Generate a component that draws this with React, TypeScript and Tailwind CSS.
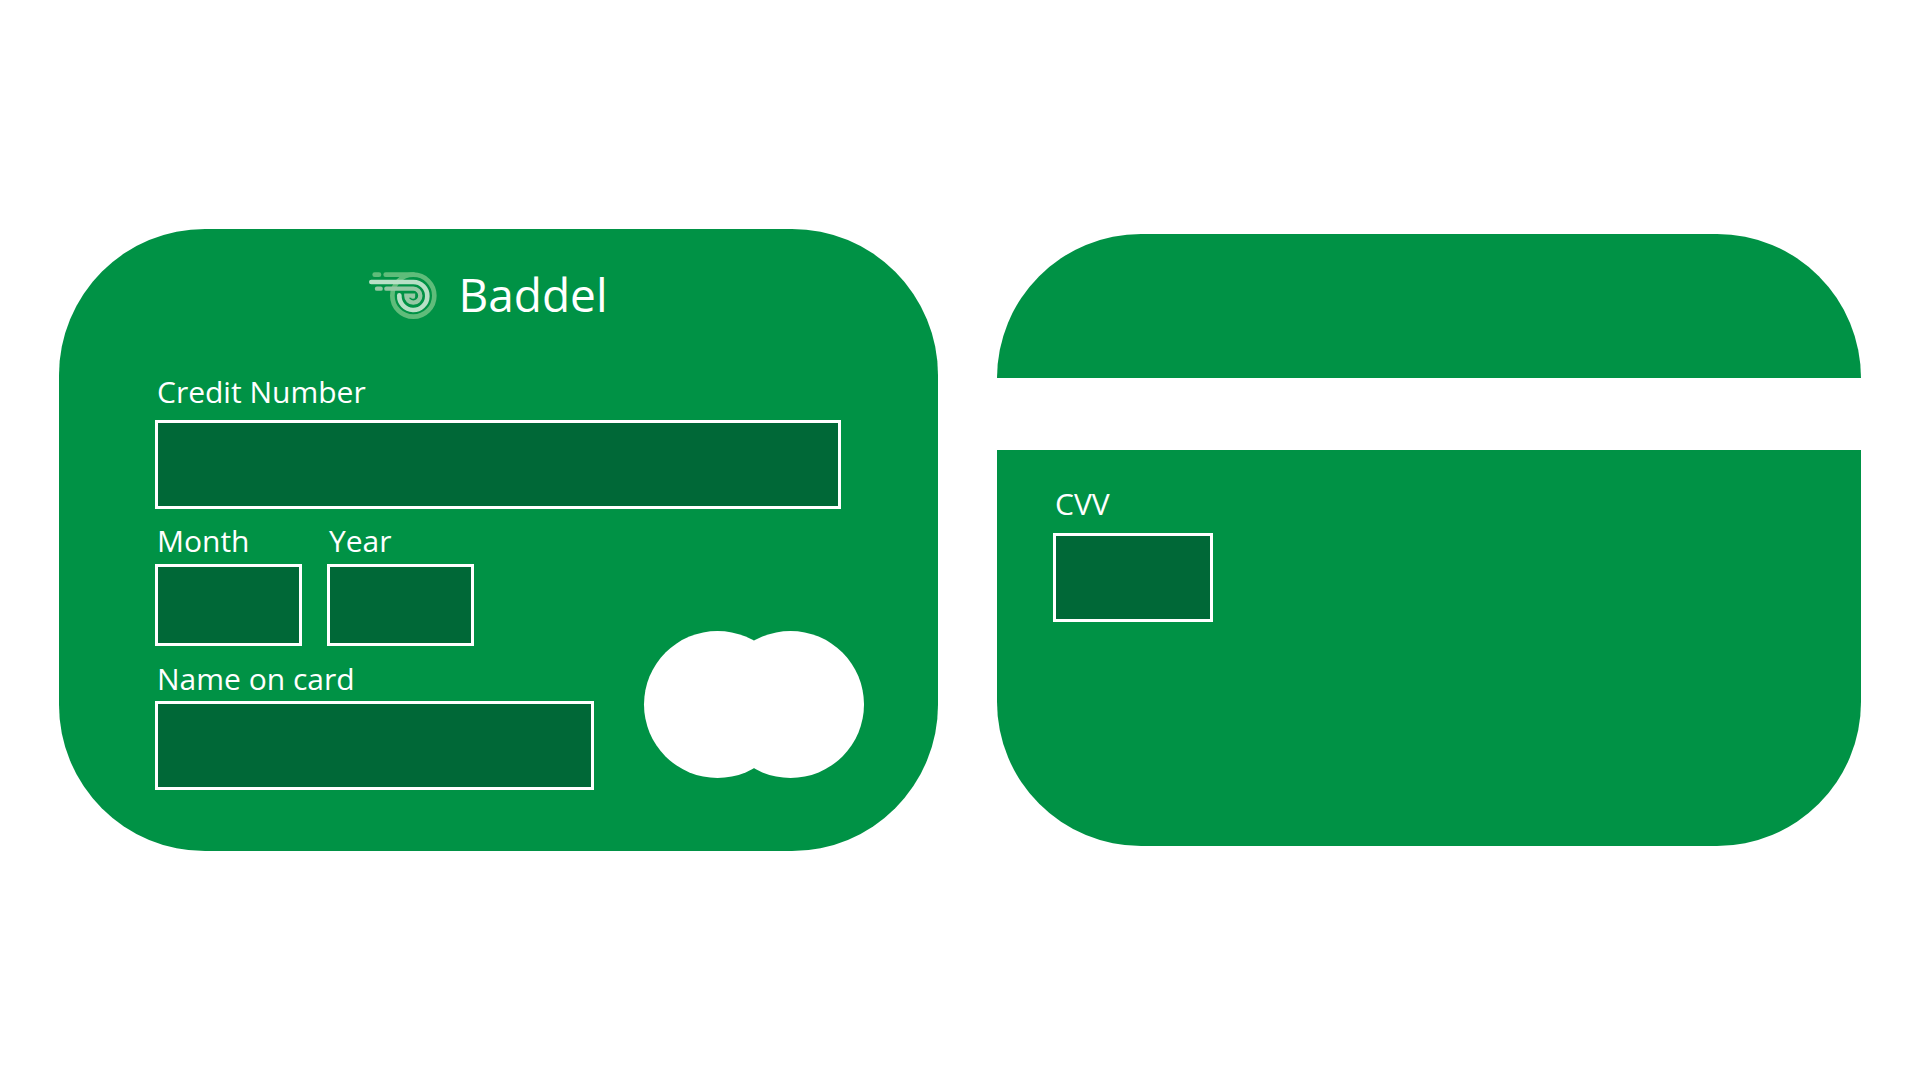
import type { InputHTMLAttributes } from "react";

type FieldProps = InputHTMLAttributes<HTMLInputElement> & {
  id: string;
  label: string;
  gap: string;
  size: string;
};

function Field({ id, label, gap, size, ...rest }: FieldProps) {
  return (
    <div className={`flex flex-col ${gap}`}>
      <label htmlFor={id} className="pl-0.5 text-[30px] leading-10 whitespace-nowrap">
        {label}
      </label>
      <input
        id={id}
        type="text"
        className={`block border-3 border-white bg-[#006837] px-4 text-3xl text-white outline-none ${size}`}
        {...rest}
      />
    </div>
  );
}

function SpiralLogo() {
  return (
    <svg
      viewBox="0 -3 270 210"
      className="h-[70px] w-[90px]"
      fill="none"
      strokeWidth="14"
      strokeLinecap="round"
      aria-hidden="true"
    >
      <g stroke="#5fbc7a">
        <path d="M44 44H57" />
        <path d="M77 44H160" />
        <circle cx="160" cy="107" r="63" />
      </g>
      <path d="M34 66H160A42 42 0 1 1 118 106" stroke="#b8e0c6" />
      <g stroke="#95c8a4" strokeWidth="13">
        <path d="M51 86H62" />
        <path d="M79 86H160A21 21 0 1 1 139 107H159V110" />
      </g>
    </svg>
  );
}

export default function App() {
  return (
    <main className="grid min-h-screen grid-cols-[879fr_864fr] items-center gap-[59px] bg-white px-[59px] font-['Open_Sans',sans-serif] text-white">
      <section className="rounded-[146px] bg-[#009245] pt-[30px] pr-[97px] pb-[61px] pl-24">
        <header className="flex items-center justify-center gap-2 pr-7">
          <SpiralLogo />
          <h1 className="text-[46px] leading-[60px]">Baddel</h1>
        </header>
        <form className="mt-[43px] flex flex-col gap-3">
          <Field id="number" label="Credit Number" gap="gap-2" size="h-[89px] w-full" inputMode="numeric" />
          <div className="flex items-end justify-between">
            <div className="flex w-[64%] flex-col gap-[13px]">
              <div className="flex gap-[25px]">
                <Field id="month" label="Month" gap="gap-[3px]" size="h-[82px] w-[147px]" inputMode="numeric" />
                <Field id="year" label="Year" gap="gap-[3px]" size="h-[82px] w-[147px]" inputMode="numeric" />
              </div>
              <Field id="name" label="Name on card" gap="gap-[2px]" size="h-[89px] w-full" />
            </div>
            <div className="-mr-[23px] mb-3 flex shrink-0" aria-hidden="true">
              <div className="size-[147px] rounded-full bg-white" />
              <div className="-ml-[74px] size-[147px] rounded-full bg-white" />
            </div>
          </div>
        </form>
      </section>

      <section className="overflow-hidden rounded-[144px] bg-[#009245]">
        <div className="mt-36 h-[72px] bg-white" />
        <div className="px-14 pt-[34px] pb-56">
          <Field id="cvv" label="CVV" gap="gap-[9px]" size="h-[89px] w-40" inputMode="numeric" />
        </div>
      </section>
    </main>
  );
}
